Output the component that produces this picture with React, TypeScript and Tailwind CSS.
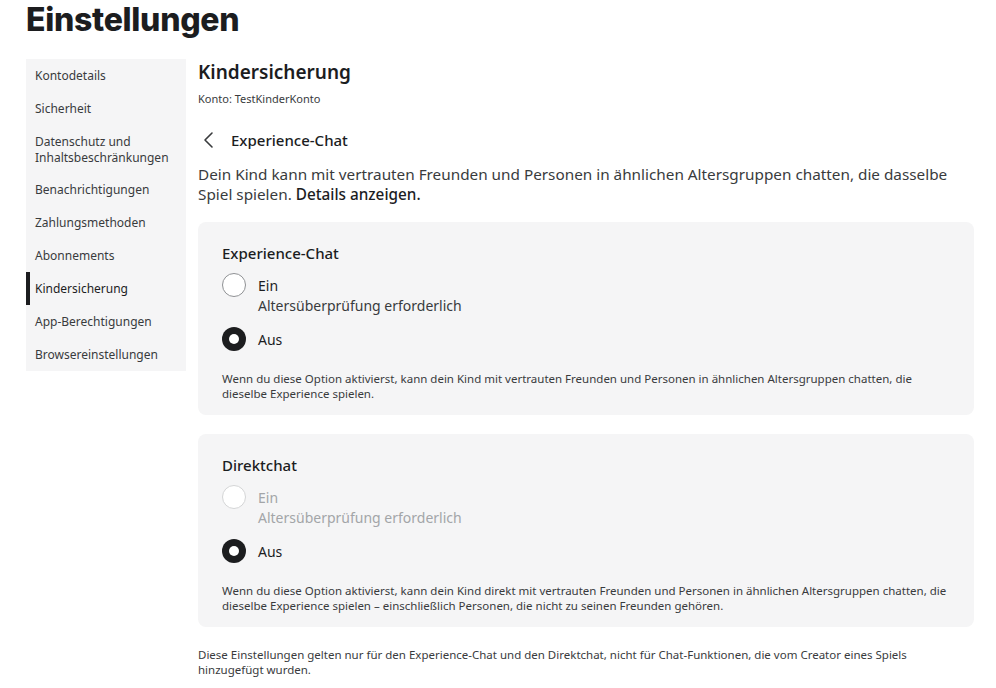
import React from "react";

const font = { fontFamily: '"Noto Sans", "Open Sans", sans-serif' };

function Radio({ checked, disabled }: { checked?: boolean; disabled?: boolean }) {
  if (checked) {
    return (
      <span className="flex h-6 w-6 shrink-0 items-center justify-center rounded-full bg-[#1c1d1f]">
        <span className="h-[10px] w-[10px] rounded-full bg-white" />
      </span>
    );
  }
  return (
    <span
      className={
        "h-6 w-6 shrink-0 rounded-full border bg-white " +
        (disabled ? "border-[#d4d5d6]" : "border-[#8f9194]")
      }
    />
  );
}

function Option({ label, sub, checked, disabled }: { label: string; sub?: string; checked?: boolean; disabled?: boolean }) {
  return (
    <div className="flex items-start gap-3">
      <Radio checked={checked} disabled={disabled} />
      <div className={"pt-[3px] text-[14px] leading-[20px] " + (disabled ? "text-[#a3a5a8]" : "text-[#393b3d]")}>
        <div className={disabled ? "text-[#a3a5a8]" : "text-[#1c1d1f]"}>{label}</div>
        {sub && <div>{sub}</div>}
      </div>
    </div>
  );
}

function Card({ title, disabledOn, desc }: { title: string; disabledOn?: boolean; desc: string }) {
  return (
    <div className="rounded-lg bg-[#f5f5f6] px-6 pb-[14px] pt-[21px]">
      <div className="text-[15px] font-medium leading-[20px] text-[#1c1d1f]">{title}</div>
      <div className="mt-[10px] flex flex-col gap-[11px]">
        <Option label="Ein" sub="Altersüberprüfung erforderlich" disabled={disabledOn} />
        <Option label="Aus" checked />
      </div>
      <p className="mt-[20px] text-[11.5px] leading-[15px] text-[#393b3d]">{desc}</p>
    </div>
  );
}

const nav = [
  "Kontodetails",
  "Sicherheit",
  "Datenschutz und Inhaltsbeschränkungen",
  "Benachrichtigungen",
  "Zahlungsmethoden",
  "Abonnements",
  "Kindersicherung",
  "App-Berechtigungen",
  "Browsereinstellungen",
];

export default function App() {
  return (
    <div className="h-[688px] w-[996px] overflow-hidden bg-white text-[#1c1d1f]" style={font}>
      <h1 className="px-[26px] text-[32px] font-extrabold leading-[40px] tracking-[-0.3px]" style={{ fontFamily: '"Inter", sans-serif' }}>
        Einstellungen
      </h1>
      <div className="mt-[19px] flex items-start gap-3 pl-[26px]">
        <nav className="w-[160px] shrink-0 bg-[#f5f5f6]">
          {nav.map((n) => {
            const active = n === "Kindersicherung";
            return (
              <div
                key={n}
                className={
                  active
                    ? "flex min-h-[33px] items-center border-l-4 border-[#1c1d1f] pl-[5px] pr-2 text-[12px] leading-[16px] text-[#1c1d1f]"
                    : "flex min-h-[33px] items-center pl-[9px] pr-2 text-[12px] leading-[16px] text-[#393b3d]"
                }
              >
                {n === "Datenschutz und Inhaltsbeschränkungen" ? (
                  <span className="pb-[7px] pt-[9px]">
                    Datenschutz und
                    <br />
                    Inhaltsbeschränkungen
                  </span>
                ) : (
                  n
                )}
              </div>
            );
          })}
        </nav>
        <main className="flex-1 pr-[22px]">
          <h2 className="text-[19px] font-semibold leading-[26px] text-[#1c1d1f]">Kindersicherung</h2>
          <div className="mt-[6px] text-[11px] leading-[16px] text-[#393b3d]">Konto: TestKinderKonto</div>
          <div className="mt-[23px] flex items-center gap-[12px]">
            <svg width="20" height="20" viewBox="0 0 20 20" fill="none" className="ml-[1px]">
              <path d="M13 3 L6 10 L13 17" stroke="#393b3d" strokeWidth="1.6" strokeLinecap="round" strokeLinejoin="round" />
            </svg>
            <span className="text-[15px] font-medium leading-[20px]">Experience-Chat</span>
          </div>
          <p className="mt-[14px] text-[15.3px] leading-[20px] text-[#393b3d]">
            Dein Kind kann mit vertrauten Freunden und Personen in ähnlichen Altersgruppen chatten, die dasselbe Spiel spielen.{" "}
            <span className="font-medium text-[#1c1d1f]">Details anzeigen.</span>
          </p>
          <div className="mt-[18px] flex flex-col gap-[19px]">
            <Card
              title="Experience-Chat"
              desc="Wenn du diese Option aktivierst, kann dein Kind mit vertrauten Freunden und Personen in ähnlichen Altersgruppen chatten, die dieselbe Experience spielen."
            />
            <Card
              title="Direktchat"
              disabledOn
              desc="Wenn du diese Option aktivierst, kann dein Kind direkt mit vertrauten Freunden und Personen in ähnlichen Altersgruppen chatten, die dieselbe Experience spielen – einschließlich Personen, die nicht zu seinen Freunden gehören."
            />
          </div>
          <p className="mt-[20px] pr-[40px] text-[11.5px] leading-[15px] text-[#393b3d]">
            Diese Einstellungen gelten nur für den Experience-Chat und den Direktchat, nicht für Chat-Funktionen, die vom Creator eines Spiels hinzugefügt wurden.
          </p>
        </main>
      </div>
    </div>
  );
}
